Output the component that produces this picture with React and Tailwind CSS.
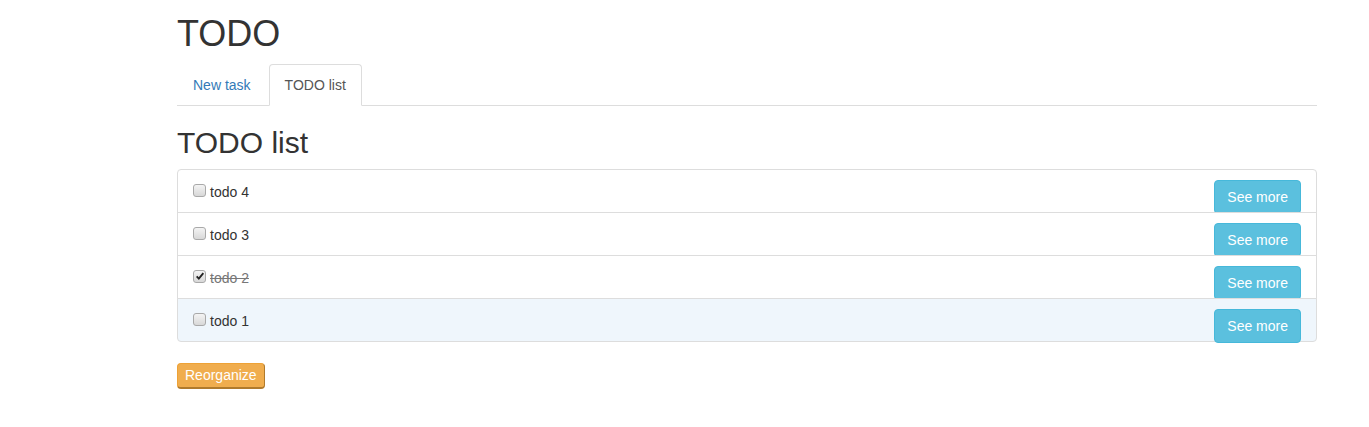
const TODOS = [
  { id: 4, title: 'todo 4', done: false },
  { id: 3, title: 'todo 3', done: false },
  { id: 2, title: 'todo 2', done: true },
  { id: 1, title: 'todo 1', done: false, active: true },
]

function Checkbox({ checked }) {
  return (
    <span className="mt-[2px] mr-[4px] flex h-[13px] w-[13px] shrink-0 items-center justify-center rounded-[3px] border border-[#a9a9a9] bg-gradient-to-b from-[#f4f4f4] to-[#d8d8d8]">
      {checked && (
        <svg viewBox="0 0 12 12" className="h-[10px] w-[10px]">
          <path d="M2 6.5 L4.6 9.2 L10 2.6" fill="none" stroke="#222" strokeWidth="2.2" />
        </svg>
      )}
    </span>
  )
}

function TodoItem({ todo, first, last }) {
  return (
    <div
      className={`relative -mb-px box-border flex h-[44px] items-start justify-between border border-[#ddd] px-[15px] pt-[10px] ${
        todo.active ? 'bg-[#eff6fc]' : 'bg-white'
      } ${first ? 'rounded-t-[4px]' : ''} ${last ? 'rounded-b-[4px]' : ''}`}
    >
      <label className="mt-[2px] flex items-start leading-[20px]">
        <Checkbox checked={todo.done} />
        <span className={todo.done ? 'text-[#777] line-through' : 'text-[#333]'}>{todo.title}</span>
      </label>
      <button className="-mb-[14px] h-[34px] rounded-[4px] border border-[#46b8da] bg-[#5bc0de] px-[12px] text-[14px] leading-[20px] text-white">
        See more
      </button>
    </div>
  )
}

export default function App() {
  return (
    <div className="min-h-[427px] bg-white font-['Liberation_Sans',Arial,sans-serif] text-[14px] text-[#333]">
      <div className="ml-[177px] w-[1140px]">
        <h1 className="mt-[14px] mb-[10px] text-[36px] leading-[1.1]">TODO</h1>

        {/* tabs */}
        <ul className="flex border-b border-[#ddd]">
          <li className="-mb-px">
            <a className="mr-[2px] block rounded-t-[4px] border border-transparent px-[15px] py-[10px] leading-[20px] text-[#337ab7]">
              New task
            </a>
          </li>
          <li className="-mb-px">
            <a className="mr-[2px] block rounded-t-[4px] border border-[#ddd] border-b-transparent bg-white px-[15px] py-[10px] leading-[20px] text-[#555]">
              TODO list
            </a>
          </li>
        </ul>

        <h2 className="mt-[20px] mb-[10px] text-[30px] leading-[1.1]">TODO list</h2>

        <div className="mb-[21px] pb-px">
          {TODOS.map((t, i) => (
            <TodoItem key={t.id} todo={t} first={i === 0} last={i === TODOS.length - 1} />
          ))}
        </div>

        <button className="h-[26px] rounded-[4px] border border-[#eea236] border-r-[#b07a2c] border-b-2 border-b-[#b07a2c] bg-[#f0ad4e] px-[7px] text-[14px] leading-[20px] text-white">
          Reorganize
        </button>
      </div>
    </div>
  )
}
